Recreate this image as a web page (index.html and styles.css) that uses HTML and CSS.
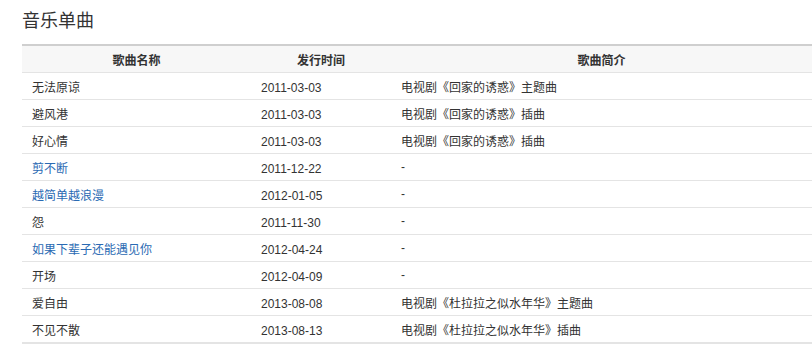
FILE: index.html
```html
<!DOCTYPE html>
<html lang="zh-CN">
<head>
<meta charset="utf-8">
<title>音乐单曲</title>
<link rel="stylesheet" href="styles.css">
</head>
<body>
<div class="page">
  <h2 class="title">音乐单曲</h2>
  <table class="songs">
    <colgroup>
      <col class="c-name">
      <col class="c-date">
      <col class="c-desc">
    </colgroup>
    <thead>
      <tr><th>歌曲名称</th><th>发行时间</th><th>歌曲简介</th></tr>
    </thead>
    <tbody>
      <tr><td>无法原谅</td><td>2011-03-03</td><td>电视剧《回家的诱惑》主题曲</td></tr>
      <tr><td>避风港</td><td>2011-03-03</td><td>电视剧《回家的诱惑》插曲</td></tr>
      <tr><td>好心情</td><td>2011-03-03</td><td>电视剧《回家的诱惑》插曲</td></tr>
      <tr><td><a class="link" href="#">剪不断</a></td><td>2011-12-22</td><td>-</td></tr>
      <tr><td><a class="link" href="#">越简单越浪漫</a></td><td>2012-01-05</td><td>-</td></tr>
      <tr><td>怨</td><td>2011-11-30</td><td>-</td></tr>
      <tr><td><a class="link" href="#">如果下辈子还能遇见你</a></td><td>2012-04-24</td><td>-</td></tr>
      <tr><td>开场</td><td>2012-04-09</td><td>-</td></tr>
      <tr><td>爱自由</td><td>2013-08-08</td><td>电视剧《杜拉拉之似水年华》主题曲</td></tr>
      <tr><td>不见不散</td><td>2013-08-13</td><td>电视剧《杜拉拉之似水年华》插曲</td></tr>
    </tbody>
  </table>
</div>
</body>
</html>
```

FILE: styles.css
```css
html, body {
  margin: 0;
  padding: 0;
  background: #fff;
  overflow: hidden;
}
body {
  font-family: "Liberation Sans", "Noto Sans CJK SC", sans-serif;
  color: #333;
  font-size: 12px;
}
.page {
  padding: 10px 0 0 22px;
}
.title {
  margin: 0;
  font-size: 18px;
  font-weight: normal;
  line-height: 23px;
  color: #333;
}
.songs {
  margin-top: 11px;
  width: 790px;
  border-collapse: collapse;
  table-layout: fixed;
  border-top: 2px solid #cfcfcf;
  border-bottom: 2px solid #e4e4e4;
}
.c-name { width: 229px; }
.c-date { width: 140px; }
.c-desc { width: 421px; }
.songs th {
  background: #f7f7f7;
  font-weight: bold;
  text-align: center;
  height: 26px;
  padding: 0;
  border-bottom: 1px solid #e4e4e4;
  color: #333;
}
.songs td {
  height: 26px;
  padding: 0 10px;
  border-bottom: 1px solid #e4e4e4;
  white-space: nowrap;
}
.songs td:nth-child(2) {
  padding-top: 4px;
  height: 22px;
}
.link {
  color: #2a6ab3;
  text-decoration: none;
}
```
